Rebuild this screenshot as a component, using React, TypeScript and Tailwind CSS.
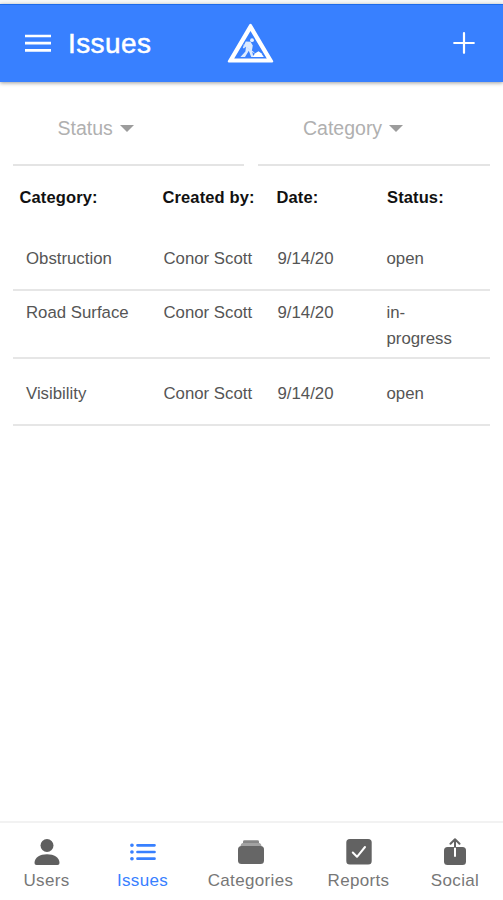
import React from "react";

type Issue = { category: string; author: string; date: string; status: string[]; row: string };

const issues: Issue[] = [
  { category: "Obstruction", author: "Conor Scott", date: "9/14/20", status: ["open"], row: "h-[75px] pt-[30px]" },
  { category: "Road Surface", author: "Conor Scott", date: "9/14/20", status: ["in-", "progress"], row: "h-[68px] pt-[9px]" },
  { category: "Visibility", author: "Conor Scott", date: "9/14/20", status: ["open"], row: "h-[67px] pt-[22px]" },
];

function WorksLogo() {
  return (
    <svg className="ml-[76px] h-[40px] w-[47px] shrink-0" viewBox="0 0 47 40" fill="none">
      <path
        d="M22.3 1.5 Q23.5 0 24.7 1.5 L46.2 38 Q46.5 39.6 45 39.6 H2 Q0.5 39.6 0.8 38 Z M23.5 8 L7.2 35.6 H39.8 Z"
        fill="#fff"
        fillRule="evenodd"
      />
      <circle cx="25" cy="17.2" r="1.9" fill="#e8f1ff" />
      <path d="M18.8 18.6 L23.5 18.8 L25.8 22.5 L25 27 L26.3 34 H24.2 L21.8 27.8 L18 34 H13.4 L18.4 28.5 L19 23.5 L16.8 25.5 L15.8 24.4 Z" fill="#dceaff" />
      <path d="M16.5 22 L27.5 30" stroke="#cfe2ff" strokeWidth="1" />
      <path d="M25.3 34 L28.3 30.3 L31.5 28.3 L34.3 30.3 L36.8 34 Z" fill="#fff" />
    </svg>
  );
}

function Filter({ label, className }: { label: string; className: string }) {
  return (
    <button className={`flex h-[84px] items-start border-b-2 border-[#e4e4e4] pt-[34px] text-[19.5px] leading-6 text-[#b0b0b0] ${className}`}>
      {label}
      <svg className="mt-[9px] ml-[7px] h-[7px] w-[14px]" viewBox="0 0 14 7">
        <path d="M0 0 H14 L7 7 Z" fill="#9c9c9c" />
      </svg>
    </button>
  );
}

function UserIcon() {
  return (
    <svg className="h-7 w-7" viewBox="0 0 28 28" fill="#5f5f5f">
      <circle cx="14" cy="7.5" r="6.5" />
      <path d="M1.5 25 C1.5 19 7 16.2 14 16.2 S26.5 19 26.5 25 Q26.5 27 24.5 27 H3.5 Q1.5 27 1.5 25 Z" />
    </svg>
  );
}

function ListIcon() {
  return (
    <svg className="h-7 w-7" viewBox="0 0 28 28" stroke="#3880ff" strokeLinecap="round">
      <path d="M8.5 7.3 H25.5 M8.5 14 H25.5 M8.5 20.7 H25.5" strokeWidth="2.7" />
      <path d="M2.9 7.3 H3 M2.9 14 H3 M2.9 20.7 H3" strokeWidth="3.6" />
    </svg>
  );
}

function AlbumsIcon() {
  return (
    <svg className="h-7 w-7" viewBox="0 0 28 28">
      <path d="M6 3.5 Q6 2.3 7.5 2.3 H20.5 Q22 2.3 22 3.5 V5 H6 Z" fill="#878787" />
      <path d="M3.5 8.5 Q3.7 5 6 5 H22 Q24.3 5 24.5 8.5 Z" fill="#a2a2a2" />
      <rect x="1" y="8" width="26" height="18" rx="3.5" fill="#666" />
    </svg>
  );
}

function CheckIcon() {
  return (
    <svg className="h-7 w-7" viewBox="0 0 28 28">
      <rect x="1.3" y="1" width="25.4" height="25.4" rx="3.5" fill="#626262" />
      <path d="M7.8 14.5 L12 18.8 L20 9" fill="none" stroke="#fff" strokeWidth="2" strokeLinecap="round" strokeLinejoin="round" />
    </svg>
  );
}

function ShareIcon() {
  return (
    <svg className="h-7 w-7" viewBox="0 0 28 28" fill="none" strokeLinecap="round" strokeLinejoin="round">
      <rect x="3" y="9" width="22" height="18" rx="3.5" fill="#626262" />
      <path d="M14 9 V18" stroke="#fff" strokeWidth="2" />
      <path d="M14 9 V1.5 M9.5 5.8 L14 1.3 L18.5 5.8" stroke="#626262" strokeWidth="2" />
    </svg>
  );
}

const tabs = [
  { label: "Users", icon: <UserIcon />, className: "w-[93px] text-[#777]" },
  { label: "Issues", icon: <ListIcon />, className: "w-[99px] text-[#3880ff]" },
  { label: "Categories", icon: <AlbumsIcon />, className: "w-[117px] text-[#777]" },
  { label: "Reports", icon: <CheckIcon />, className: "w-[99px] text-[#777]" },
  { label: "Social", icon: <ShareIcon />, className: "w-[94px] text-[#777]" },
];

export default function App() {
  return (
    <div className="flex h-[900px] w-[503px] flex-col overflow-hidden bg-white font-['Liberation_Sans',Arial,sans-serif]">
      <div className="h-1 shrink-0 bg-[#f6f8f8]" />
      <header className="flex h-[78px] shrink-0 items-center border-t border-[#1c6bea] bg-[#3880ff] pb-[2px] pl-[25px] text-white shadow-[0_1px_4px_rgba(0,0,0,0.4)]">
        <svg className="h-5 w-[26px]" viewBox="0 0 26 20" stroke="#fff" strokeWidth="2.7">
          <path d="M0 3 H26 M0 10.2 H26 M0 17.4 H26" />
        </svg>
        <h1 className="mt-[3px] ml-[17px] w-[83px] text-[28px] leading-8 tracking-[0.4px] [-webkit-text-stroke:0.5px_#fff]">Issues</h1>
        <WorksLogo />
        <svg className="ml-[179px] h-[22px] w-[22px]" viewBox="0 0 22 22" stroke="#fff" strokeWidth="2.2" strokeLinecap="round">
          <path d="M1.2 11 H20.8 M11 1.2 V20.8" />
        </svg>
      </header>

      <main className="flex-1 px-[13px]">
        <div className="flex gap-[14px]">
          <Filter label="Status" className="w-[231px] pl-[44.5px]" />
          <Filter label="Category" className="w-[232px] pl-[45px]" />
        </div>

        <div className="flex h-[50px] pt-[21px] text-[16.5px] leading-5 font-bold tracking-[0.12px] text-[#111]">
          <span className="w-[143px] pl-[6.5px]">Category:</span>
          <span className="w-[114px] pl-[6.5px]">Created by:</span>
          <span className="w-[111px] pl-[6.5px]">Date:</span>
          <span className="pl-[6px]">Status:</span>
        </div>

        {issues.map((issue) => (
          <div key={issue.category} className={`flex border-b-2 border-[#e6e6e6] text-[16.8px] leading-[26px] text-[#555] ${issue.row}`}>
            <span className="w-[150.5px] pl-[13px]">{issue.category}</span>
            <span className="w-[114px]">{issue.author}</span>
            <span className="w-[109px]">{issue.date}</span>
            <span className="flex flex-col">
              {issue.status.map((line) => (
                <span key={line}>{line}</span>
              ))}
            </span>
          </div>
        ))}
      </main>

      <nav className="flex h-[79px] shrink-0 border-t-2 border-[#f2f2f2]">
        {tabs.map((tab) => (
          <button key={tab.label} className={`flex flex-col items-center pt-[15px] text-[17px] leading-5 tracking-[0.35px] ${tab.className}`}>
            {tab.icon}
            <span className="mt-[5px]">{tab.label}</span>
          </button>
        ))}
      </nav>
    </div>
  );
}
